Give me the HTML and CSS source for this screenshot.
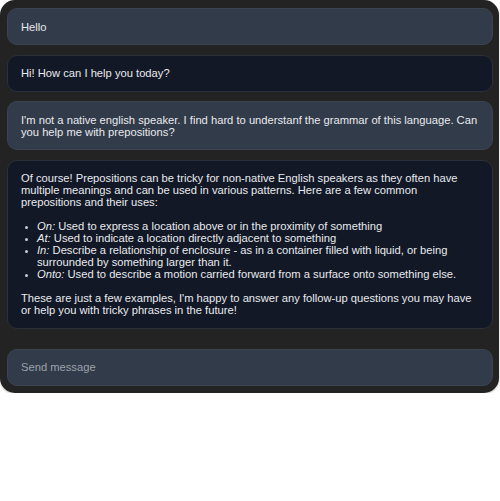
FILE: index.html
```html
<!DOCTYPE html>
<html>
<head>
<meta charset="utf-8">
<link rel="stylesheet" href="styles.css">
</head>
<body>
<div class="chat">
  <div class="messages">
    <div class="bubble user"><p>Hello</p></div>
    <div class="bubble bot"><p>Hi! How can I help you today?</p></div>
    <div class="bubble user"><p>I'm not a native english speaker. I find hard to understanf the grammar of this language. Can you help me with prepositions?</p></div>
    <div class="bubble bot">
      <p>Of course! Prepositions can be tricky for non-native English speakers as they often have multiple meanings and can be used in various patterns. Here are a few common prepositions and their uses:</p>
      <ul>
        <li><em>On:</em> Used to express a location above or in the proximity of something</li>
        <li><em>At:</em> Used to indicate a location directly adjacent to something</li>
        <li><em>In:</em> Describe a relationship of enclosure - as in a container filled with liquid, or being surrounded by something larger than it.</li>
        <li><em>Onto:</em> Used to describe a motion carried forward from a surface onto something else.</li>
      </ul>
      <p>These are just a few examples, I'm happy to answer any follow-up questions you may have or help you with tricky phrases in the future!</p>
    </div>
  </div>
  <div class="input">Send message</div>
</div>
</body>
</html>
```
FILE: styles.css
```css
* { box-sizing: border-box; }
html, body { margin: 0; padding: 0; background: #ffffff; }
body {
  font-family: "Liberation Sans", Arial, sans-serif;
  font-size: 11.2px;
  line-height: 12px;
  color: #e8eaee;
}
.chat {
  width: 499px;
  background: #232323;
  border-radius: 15px;
  padding: 8px 6px 7px 7px;
  display: flex;
  flex-direction: column;
  gap: 20px;
  box-shadow: 0 1px 2px rgba(0,0,0,0.25);
}
.messages {
  display: flex;
  flex-direction: column;
  gap: 9.5px;
}
.bubble {
  border-radius: 10px;
  padding: 11.5px 13px;
  border: 1px solid #3c4452;
}
.bubble.user { background: #323b4a; }
.bubble.bot { background: #121826; border-color: #2b303a; }
.bubble p { margin: 0; }
.bubble p + ul, .bubble ul + p { margin-top: 12px; }
.bubble ul { margin: 0; padding-left: 16px; }
.bubble li::marker { font-size: 9px; color: #c9ccd2; }
.bubble em { font-style: italic; }
.input {
  height: 37px;
  border-radius: 10px;
  background: #323b4a;
  border: 1px solid #3c4452;
  padding: 0 13px;
  display: flex;
  align-items: center;
  color: #9ba1ab;
}
```
